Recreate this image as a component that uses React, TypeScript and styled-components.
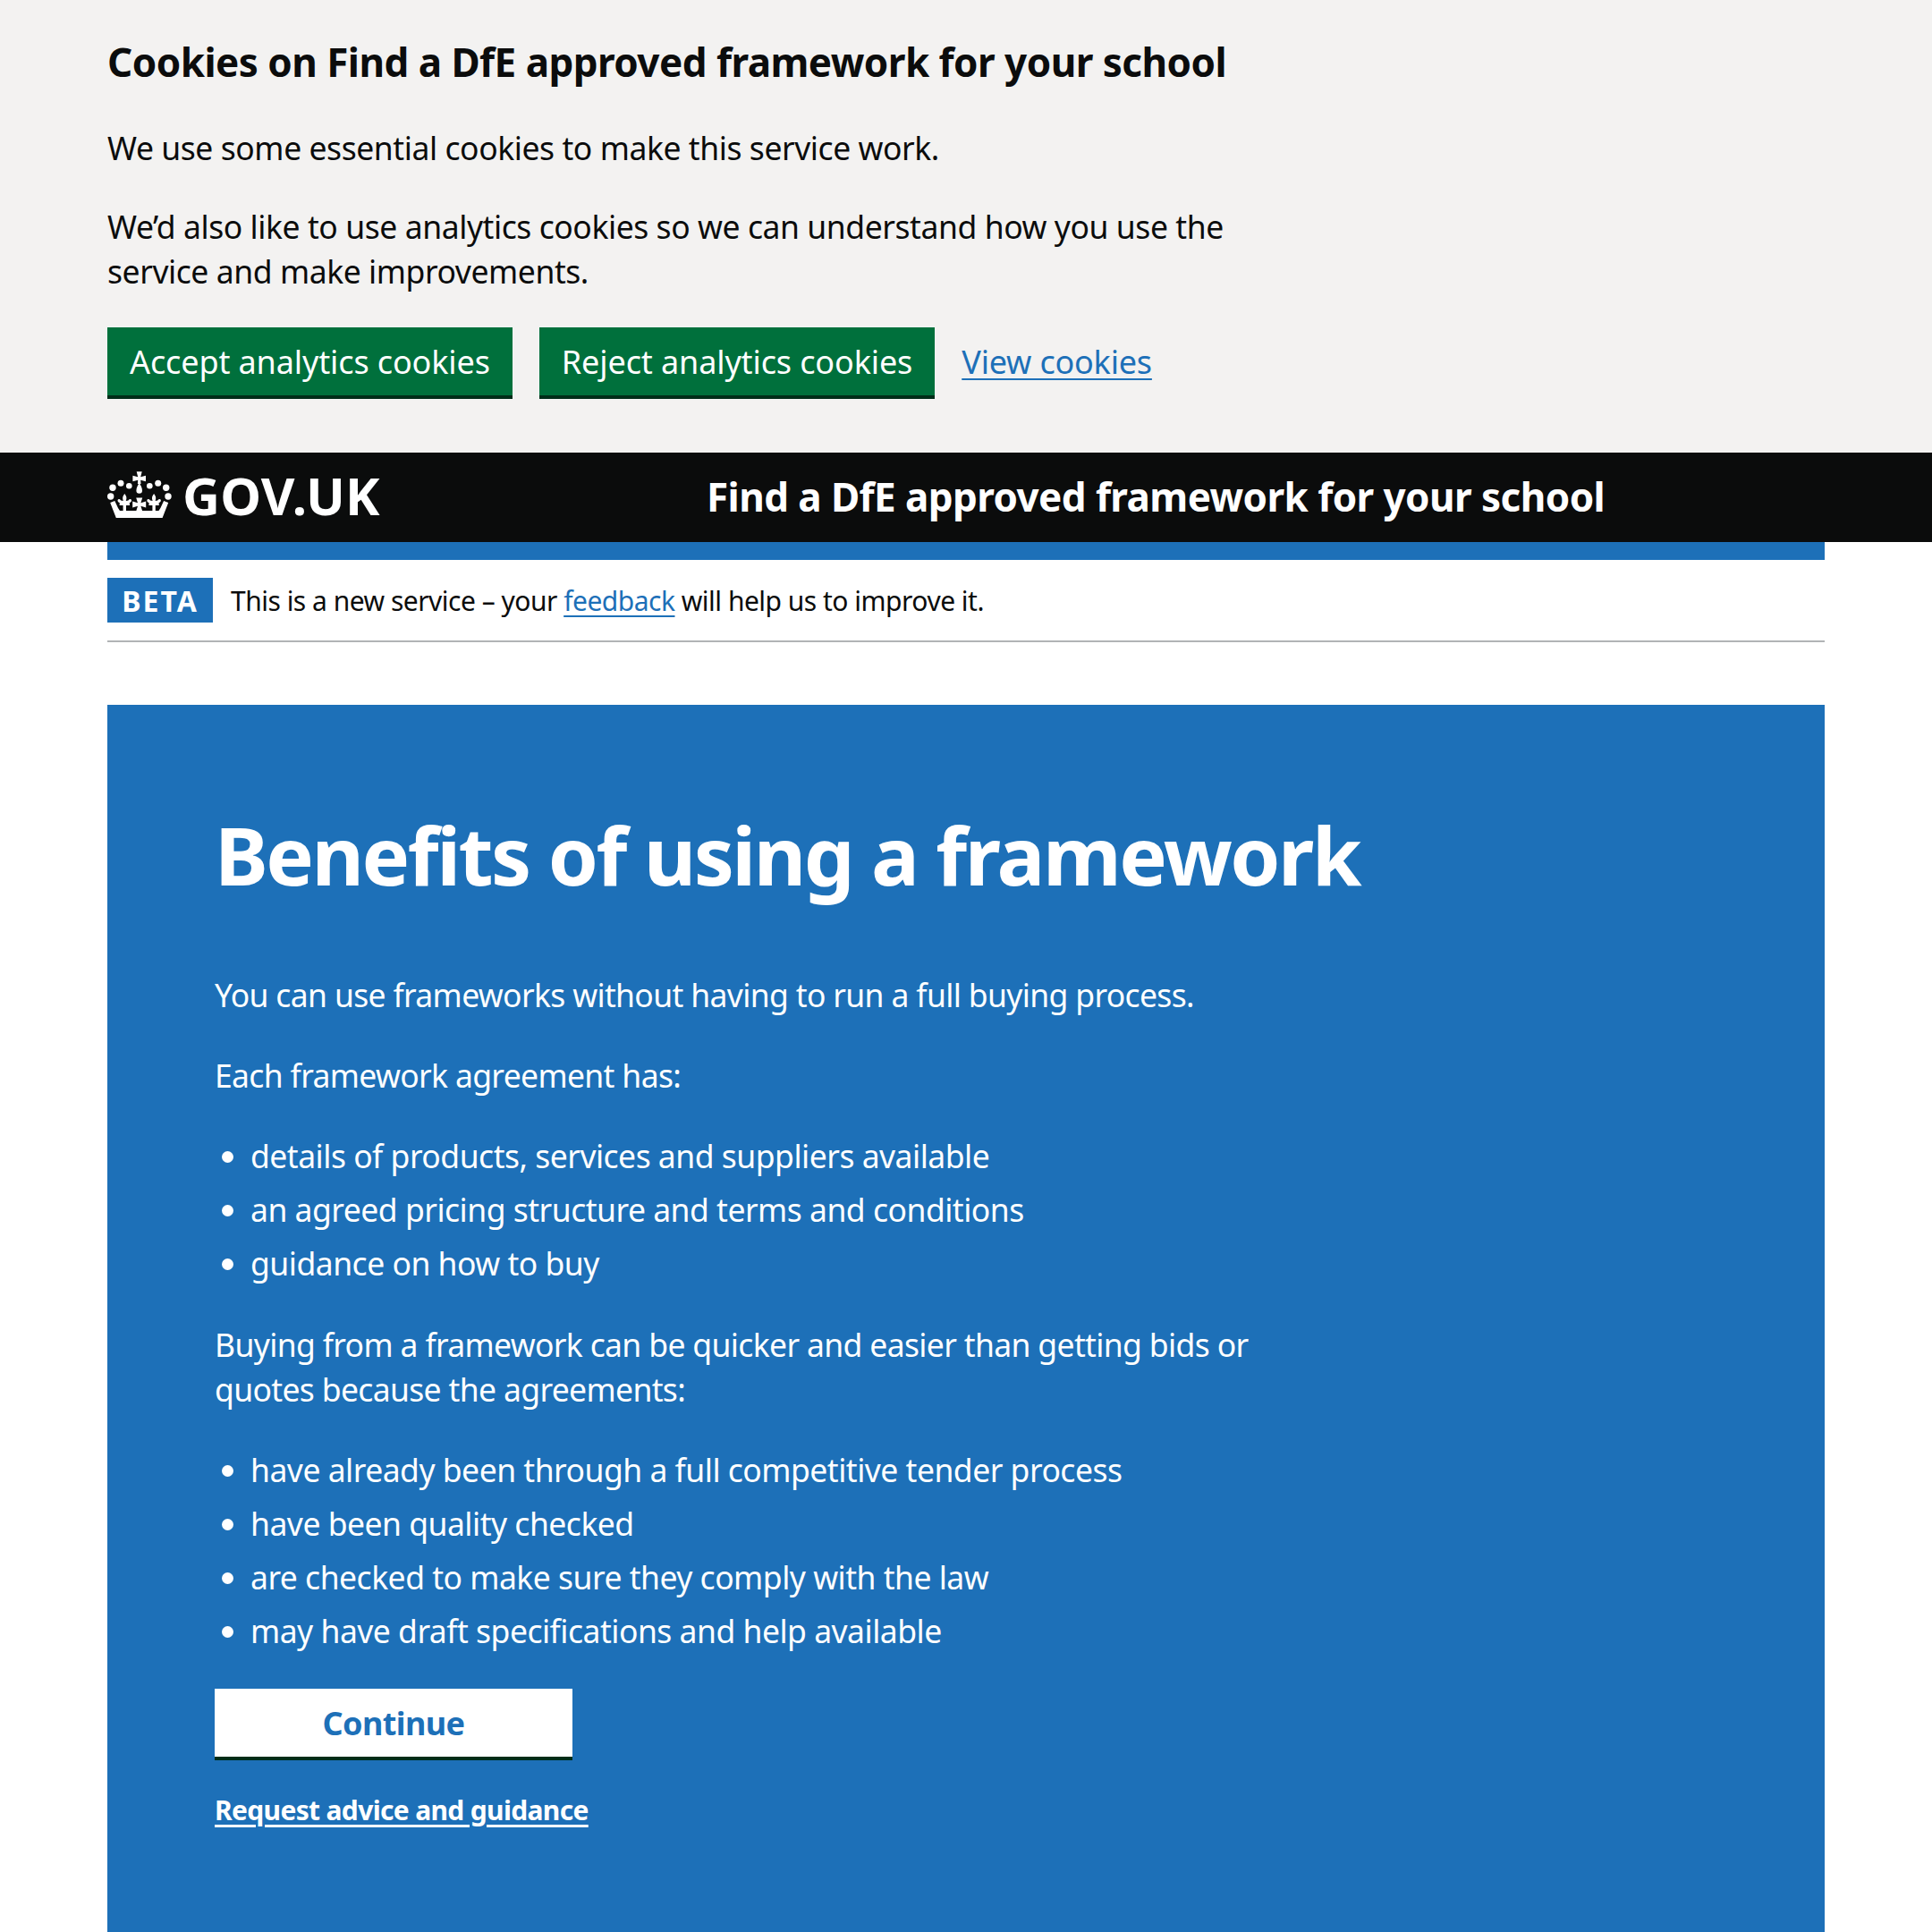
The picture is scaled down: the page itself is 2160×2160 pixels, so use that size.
import styled, { createGlobalStyle } from 'styled-components'

const GlobalStyle = createGlobalStyle`
  body {
    margin: 0;
    background: #fff;
    color: #0b0c0c;
    font-family: 'Noto Sans', 'Open Sans', sans-serif;
  }
`

const CookieBanner = styled.section`
  background: #f3f2f1;
  padding: 44px 120px 60px;
`

const CookieTitle = styled.h2`
  margin: 0 0 46px;
  font-size: 44px;
  line-height: 50px;
  font-weight: 700;
  letter-spacing: -0.53px;
`

const CookieText = styled.p`
  margin: 0 0 38px;
  max-width: 1280px;
  font-size: 35.5px;
  line-height: 50px;
  letter-spacing: -0.43px;
`

const Actions = styled.div`
  display: flex;
  align-items: center;
  gap: 30px;
`

const Button = styled.button<{ $inverse?: boolean }>`
  height: 80px;
  padding: 0 25px 4px;
  border: 0;
  border-radius: 0;
  box-shadow: inset 0 -4px 0 #002d18;
  background: ${p => (p.$inverse ? '#fff' : '#00703c')};
  color: ${p => (p.$inverse ? '#1d70b8' : '#fff')};
  font-family: inherit;
  font-size: 36px;
  font-weight: ${p => (p.$inverse ? 700 : 400)};
  letter-spacing: ${p => (p.$inverse ? '-0.6px' : '-0.12px')};
  width: ${p => (p.$inverse ? '400px' : 'auto')};
`

const TextLink = styled.a`
  color: #1d70b8;
  text-decoration: underline;
  text-decoration-thickness: 2px;
  text-underline-offset: 5px;
`

const ViewCookies = styled(TextLink)`
  padding-bottom: 3px;
  font-size: 36px;
  letter-spacing: -0.2px;
`

const Header = styled.header`
  background: #0b0c0c;
  height: 100px;
  padding: 0 120px;
  display: flex;
  align-items: center;
  color: #fff;
`

const Logo = styled.div`
  display: flex;
  align-items: center;
  gap: 12px;
  width: 670px;
  padding-bottom: 5px;
  font-size: 58px;
  font-weight: 700;
  letter-spacing: 0.2px;
`

const ServiceName = styled.div`
  padding-bottom: 2px;
  font-size: 44px;
  font-weight: 700;
  letter-spacing: -0.57px;
`

const Container = styled.main`
  margin: 0 120px;
`

const BlueRule = styled.div`
  height: 20px;
  background: #1d70b8;
`

const PhaseBanner = styled.div`
  display: flex;
  align-items: center;
  gap: 20px;
  height: 90px;
  border-bottom: 2px solid #b1b4b6;
  font-size: 30px;
  letter-spacing: -0.5px;
`

const PhaseTag = styled.strong`
  width: 118px;
  height: 50px;
  display: flex;
  align-items: center;
  justify-content: center;
  background: #1d70b8;
  color: #fff;
  font-size: 32px;
  font-weight: 700;
  letter-spacing: 2px;
`

const Panel = styled.section`
  margin-top: 70px;
  background: #1d70b8;
  color: #fff;
  padding: 112px 120px 120px;
`

const Title = styled.h1`
  margin: 0 0 77px;
  font-size: 90px;
  line-height: 110px;
  font-weight: 700;
  letter-spacing: -2.5px;
`

const BodyText = styled.p`
  margin: 0 0 40px;
  max-width: 1200px;
  font-size: 35.5px;
  line-height: 50px;
  letter-spacing: -0.65px;
`

const BulletList = styled.ul`
  margin: 0 0 40.5px;
  padding: 0 0 0 40px;
  list-style: disc;
`

const BulletItem = styled.li`
  font-size: 35.5px;
  line-height: 50px;
  letter-spacing: -0.5px;
  margin-bottom: 10px;
`

const AdviceLink = styled(TextLink)`
  display: block;
  width: fit-content;
  margin-top: 36px;
  color: #fff;
  font-size: 30px;
  line-height: 40px;
  font-weight: 700;
  letter-spacing: -0.66px;
  text-decoration-thickness: 3px;
`

const FLEUR =
  'M19.3 25C21.5 27.5 22 30 20.8 33L23.5 32.5C24.5 30.5 26.5 30.5 27 32C27.5 33.5 26 35 24.8 35L25 38L21 38L21 45L17.6 45L17.6 38L13.6 38L13.8 35C12.6 35 11 33.5 11.6 32C12.1 30.5 14.1 30.5 15.1 32.5L17.8 33C16.6 30 17.1 27.5 19.3 25Z'

const Crown = () => (
  <svg width='72' height='53' viewBox='0 0 72 53' fill='#fff' aria-hidden='true'>
    <path d='M32.7 .3h6l-1.5 6 5.8-1.5v6.5l-5.8-1.500.3 4.200h-3.600l.3-4.200-5.800 1.500V4.800l5.800 1.500z' />
    <path d='M35.7 12.5c1.3 3 3.3 5.500 3.300 8.900a3.300 3.300 0 0 1-6.600 0c0-3.400 2-5.900 3.300-8.900z' />
    <circle cx='15' cy='13.3' r='3.5' />
    <circle cx='24.3' cy='16.3' r='3.3' />
    <circle cx='47.3' cy='16.3' r='3.3' />
    <circle cx='56.7' cy='13.3' r='3.5' />
    <circle cx='6' cy='18.3' r='3.7' />
    <circle cx='65.7' cy='18.3' r='3.7' />
    <circle cx='3.7' cy='28' r='3.7' />
    <circle cx='68' cy='28' r='3.7' />
    <path d={FLEUR} />
    <path d={FLEUR} transform='translate(32.8 0)' />
    <path d='M32.2 29.5h7l-1.8 5.700 5.800-1.700v7l-5.800-1.700 1.800 5.700h-7l1.800-5.700-5.800 1.700v-7l5.800 1.700z' />
    <path d='M3.2 35l5.100-2 3.700 8 2 3H57.400l2-3 3.700-8 5.100 2-6.600 17H9.800z' />
  </svg>
)

export default function App() {
  return (
    <>
      <GlobalStyle />
      <CookieBanner>
        <CookieTitle>Cookies on Find a DfE approved framework for your school</CookieTitle>
        <CookieText>We use some essential cookies to make this service work.</CookieText>
        <CookieText>
          We’d also like to use analytics cookies so we can understand how you use the service and
          make improvements.
        </CookieText>
        <Actions>
          <Button>Accept analytics cookies</Button>
          <Button>Reject analytics cookies</Button>
          <ViewCookies href='#'>View cookies</ViewCookies>
        </Actions>
      </CookieBanner>
      <Header>
        <Logo>
          <Crown />
          GOV.UK
        </Logo>
        <ServiceName>Find a DfE approved framework for your school</ServiceName>
      </Header>
      <Container>
        <BlueRule />
        <PhaseBanner>
          <PhaseTag>BETA</PhaseTag>
          <span>
            This is a new service – your <TextLink href='#'>feedback</TextLink> will help us to
            improve it.
          </span>
        </PhaseBanner>
        <Panel>
          <Title>Benefits of using a framework</Title>
          <BodyText>You can use frameworks without having to run a full buying process.</BodyText>
          <BodyText>Each framework agreement has:</BodyText>
          <BulletList>
            <BulletItem>details of products, services and suppliers available</BulletItem>
            <BulletItem>an agreed pricing structure and terms and conditions</BulletItem>
            <BulletItem>guidance on how to buy</BulletItem>
          </BulletList>
          <BodyText>
            Buying from a framework can be quicker and easier than getting bids or quotes because
            the agreements:
          </BodyText>
          <BulletList>
            <BulletItem>have already been through a full competitive tender process</BulletItem>
            <BulletItem>have been quality checked</BulletItem>
            <BulletItem>are checked to make sure they comply with the law</BulletItem>
            <BulletItem>may have draft specifications and help available</BulletItem>
          </BulletList>
          <Button $inverse>Continue</Button>
          <AdviceLink href='#'>Request advice and guidance</AdviceLink>
        </Panel>
      </Container>
    </>
  )
}
